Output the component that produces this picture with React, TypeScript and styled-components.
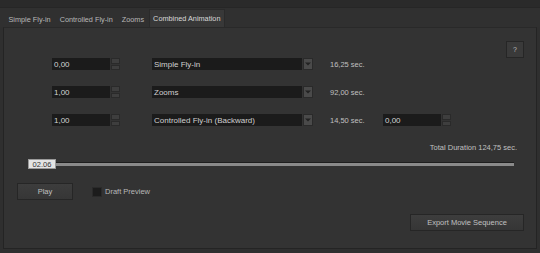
import React, { FC, ReactElement } from 'react';
import styled, { createGlobalStyle } from 'styled-components';

const GlobalStyle = createGlobalStyle`
  html, body {
    margin: 0;
    padding: 0;
    background: #2c2c2c;
  }
  body {
    font-family: 'Liberation Sans', Arial, sans-serif;
    font-size: 8px;
    color: #c4c4c4;
  }
`;

const Window = styled.div`
  width: 540px;
  height: 253px;
  display: flex;
  flex-direction: column;
  background: #2f2f2f;
  overflow: hidden;
`;

const TopStrip = styled.div`
  height: 7px;
  background: #2a2a2a;
  border-bottom: 1px solid #262626;
`;

const TabBar = styled.div`
  height: 19px;
  display: flex;
  align-items: flex-end;
  padding-left: 4px;
  background: #303030;
`;

const Tab = styled.div<{ $active?: boolean }>`
  height: ${(p) => (p.$active ? 17 : 15)}px;
  padding: 0 3.5px;
  display: flex;
  align-items: center;
  font-size: 7.3px;
  color: ${(p) => (p.$active ? '#d8d8d8' : '#b8b8b8')};
  background: ${(p) => (p.$active ? '#383838' : 'transparent')};
  border: 1px solid ${(p) => (p.$active ? '#2a2a2a' : 'transparent')};
  border-bottom: none;
`;

const Panel = styled.div`
  margin: 0 3px;
  height: 222px;
  box-sizing: border-box;
  background: #333333;
  border: 1px solid #242424;
  border-top-color: #292929;
  display: flex;
  flex-direction: column;
  padding: 13px 12px 0 13px;
`;

const HelpRow = styled.div`
  display: flex;
  justify-content: flex-end;
  height: 16px;
`;

const HelpButton = styled.div`
  width: 16px;
  height: 15px;
  background: #3a3a3a;
  border: 1px solid #262626;
  display: flex;
  align-items: center;
  justify-content: center;
  font-size: 7px;
  color: #bbb;
`;

const Rows = styled.div`
  display: flex;
  flex-direction: column;
  gap: 16px;
  margin-top: 1px;
`;

const Row = styled.div`
  display: flex;
  align-items: center;
  height: 12px;
  padding-left: 35px;
`;

const Spin = styled.div`
  display: flex;
  align-items: center;
  height: 12px;
`;

const SpinField = styled.div`
  width: 58px;
  height: 12px;
  box-sizing: border-box;
  background: #1b1b1b;
  padding-left: 2px;
  display: flex;
  align-items: center;
  color: #d4d4d4;
  font-size: 8px;
`;

const SpinButtons = styled.div`
  width: 9px;
  height: 12px;
  margin-left: 1px;
  display: flex;
  flex-direction: column;
  gap: 1px;
`;

const SpinButton = styled.div`
  flex: 1;
  background: #3e3e3e;
  border: 1px solid #2a2a2a;
`;

const Select = styled.div`
  margin-left: 32px;
  width: 161px;
  height: 12px;
  display: flex;
  align-items: center;
`;

const SelectText = styled.div`
  flex: 1;
  height: 12px;
  background: #1b1b1b;
  padding-left: 2px;
  display: flex;
  align-items: center;
  color: #d0d0d0;
  font-size: 8px;
`;

const SelectArrow = styled.div`
  width: 10px;
  height: 12px;
  margin-left: 1px;
  box-sizing: border-box;
  background: #4a4a4a;
  border: 1px solid #2a2a2a;
  display: flex;
  align-items: center;
  justify-content: center;
`;

const Seconds = styled.div`
  width: 53px;
  margin-left: 17px;
  font-size: 7.5px;
  color: #c0c0c0;
`;

const TotalRow = styled.div`
  display: flex;
  justify-content: flex-end;
  margin-top: 17px;
  padding-right: 7px;
  font-size: 7.5px;
  color: #c0c0c0;
`;

const SliderRow = styled.div`
  display: flex;
  align-items: center;
  margin-top: 7px;
  margin-left: 11px;
  width: 486px;
  height: 10px;
`;

const SliderHandle = styled.div`
  width: 28px;
  height: 10px;
  box-sizing: border-box;
  background: #e4e4e4;
  border: 1px solid #9a9a9a;
  color: #333;
  font-size: 7.5px;
  display: flex;
  align-items: center;
  justify-content: center;
`;

const SliderTrack = styled.div`
  flex: 1;
  height: 3px;
  background: #8a8a8a;
  border-top: 1px solid #1e1e1e;
`;

const PlayRow = styled.div`
  display: flex;
  align-items: center;
  margin-top: 14px;
  gap: 19px;
`;

const Button = styled.div<{ $w: number }>`
  width: ${(p) => p.$w}px;
  height: 17px;
  box-sizing: border-box;
  background: linear-gradient(#3d3d3d, #363636);
  border: 1px solid #262626;
  display: flex;
  align-items: center;
  justify-content: center;
  font-size: 7.5px;
  color: #c0c0c0;
`;

const Check = styled.label`
  display: flex;
  align-items: center;
  gap: 3px;
  font-size: 7.5px;
  color: #b8b8b8;
`;

const Box = styled.span`
  width: 8px;
  height: 8px;
  background: #1c1c1c;
  border: 1px solid #2a2a2a;
`;

const ExportRow = styled.div`
  display: flex;
  justify-content: flex-end;
  margin-top: 14px;
`;

const Arrow: FC = () => (
  <svg width="6" height="4" viewBox="0 0 6 4">
    <path d="M0 0.5h6L3 3.5z" fill="#222" />
  </svg>
);

type Item = { start: string; anim: string; sec: string; extra?: string };

const items: Item[] = [
  { start: '0,00', anim: 'Simple Fly-in', sec: '16,25 sec.' },
  { start: '1,00', anim: 'Zooms', sec: '92,00 sec.' },
  { start: '1,00', anim: 'Controlled Fly-in (Backward)', sec: '14,50 sec.', extra: '0,00' },
];

const SpinBox: FC<{ value: string }> = ({ value }) => (
  <Spin>
    <SpinField>{value}</SpinField>
    <SpinButtons>
      <SpinButton />
      <SpinButton />
    </SpinButtons>
  </Spin>
);

const App: FC = (): ReactElement => (
  <>
    <GlobalStyle />
    <Window>
      <TopStrip />
      <TabBar>
        <Tab>Simple Fly-in</Tab>
        <Tab>Controlled Fly-in</Tab>
        <Tab>Zooms</Tab>
        <Tab $active>Combined Animation</Tab>
      </TabBar>
      <Panel>
        <HelpRow>
          <HelpButton>?</HelpButton>
        </HelpRow>
        <Rows>
          {items.map((it) => (
            <Row key={it.anim}>
              <SpinBox value={it.start} />
              <Select>
                <SelectText>{it.anim}</SelectText>
                <SelectArrow>
                  <Arrow />
                </SelectArrow>
              </Select>
              <Seconds>{it.sec}</Seconds>
              {it.extra && <SpinBox value={it.extra} />}
            </Row>
          ))}
        </Rows>
        <TotalRow>Total Duration 124,75 sec.</TotalRow>
        <SliderRow>
          <SliderHandle>02.06</SliderHandle>
          <SliderTrack />
        </SliderRow>
        <PlayRow>
          <Button $w={56}>Play</Button>
          <Check>
            <Box />
            Draft Preview
          </Check>
        </PlayRow>
        <ExportRow>
          <Button $w={114}>Export Movie Sequence</Button>
        </ExportRow>
      </Panel>
    </Window>
  </>
);

export default App;
